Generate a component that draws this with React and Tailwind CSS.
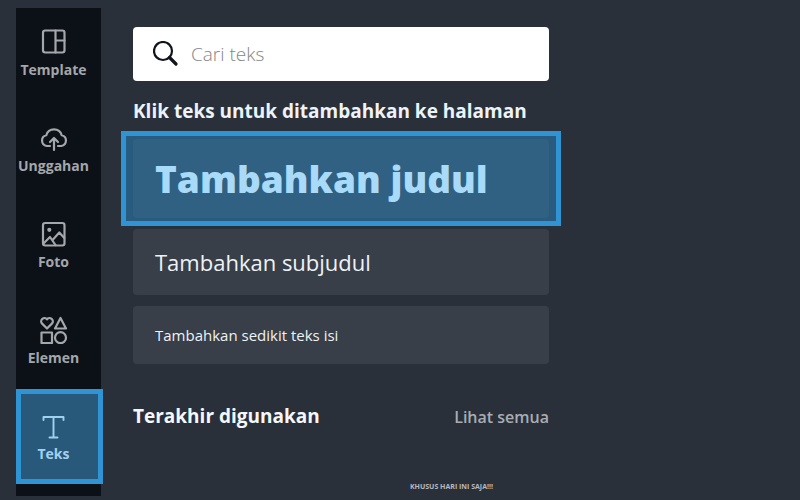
import React, { useState } from 'react';

const iconProps = {
  viewBox: '0 0 28 28',
  fill: 'none',
  stroke: 'currentColor',
  strokeWidth: 2.2,
  strokeLinecap: 'round',
  strokeLinejoin: 'round',
  className: 'w-7 h-7',
  'aria-hidden': true,
};

function TemplateIcon() {
  return (
    <svg {...iconProps}>
      <rect x="3" y="2.5" width="21.5" height="22" rx="2.2" />
      <path d="M15.500 2.500v22M15.500 12.500h9" />
    </svg>
  );
}

function UploadIcon() {
  return (
    <svg {...iconProps}>
      <path d="M10 22H6.800A5.500 5.500 0 0 1 6.300 11.200A8 8 0 0 1 21.700 11.200A5.500 5.500 0 0 1 21.200 22H18" />
      <path d="M14 26V14.500M10 18l4-4 4 4" />
    </svg>
  );
}

function PhotoIcon() {
  return (
    <svg {...iconProps}>
      <rect x="3" y="3" width="21.500" height="22.500" rx="2.200" />
      <circle cx="9.300" cy="9.800" r="1" fill="currentColor" />
      <path d="M3.500 23.500l6.500-6.500 5.500 8M12.800 19.700l6.500-7.200 5 5.500" />
    </svg>
  );
}

function ElementsIcon() {
  return (
    <svg {...iconProps}>
      <path d="M7 12.500L1.900 7.400A3.100 3.100 0 0 1 7 3.300A3.100 3.100 0 0 1 12.100 7.400Z" />
      <path d="M20.500 2l5.500 10.500h-11z" />
      <rect x="1.500" y="16.500" width="10.500" height="10.500" />
      <circle cx="20.500" cy="21.700" r="5.500" />
    </svg>
  );
}

function TextIcon() {
  return (
    <svg {...iconProps}>
      <path d="M3.500 8V5h20v3M13.500 5v20.500M9.500 25.500h8" strokeWidth="1.900" />
    </svg>
  );
}

const NAV = [
  { label: 'Template', icon: TemplateIcon },
  { label: 'Unggahan', icon: UploadIcon },
  { label: 'Foto', icon: PhotoIcon },
  { label: 'Elemen', icon: ElementsIcon },
  { label: 'Teks', icon: TextIcon, active: true },
];

function NavItem({ label, icon: Icon, active }) {
  return (
    <li className="relative h-24">
      {active && (
        <span className="absolute -top-[3px] left-0 -right-0.5 h-[95px] border-[5px] border-[#3094d4] bg-[#28597a]" />
      )}
      <button
        type="button"
        className={`relative w-full pt-5 pr-[10px] flex flex-col items-center gap-1 text-[14px] leading-5 font-bold ${active ? 'text-[#a2d1ef]' : 'text-[#a4a7ab]'}`}
      >
        <Icon />
        {label}
      </button>
    </li>
  );
}

export default function App() {
  const [query, setQuery] = useState('');

  return (
    <div className="min-h-screen bg-[#29303a] px-4 pt-2 pb-1 flex gap-8 font-['Open_Sans','Noto_Sans',sans-serif]">
      <nav className="w-[85px] shrink-0 bg-[#0c1117]">
        <ul>
          {NAV.map((item) => (
            <NavItem key={item.label} {...item} />
          ))}
        </ul>
      </nav>

      <main className="flex-1 min-w-0 max-w-[416px] pt-[19px]">
        <label className="h-[54px] px-5 flex items-center gap-3 rounded bg-white text-[#10151b]">
          <svg viewBox="0 0 26 26" fill="none" stroke="currentColor" strokeWidth="2.2" className="w-[26px] h-[26px] shrink-0" aria-hidden="true">
            <circle cx="10" cy="10" r="9" />
            <path d="M16.500 16.500l6.500 6.500" strokeWidth="3.200" strokeLinecap="round" />
          </svg>
          <input
            type="search"
            aria-label="Cari teks"
            placeholder="Cari teks"
            value={query}
            onChange={(e) => setQuery(e.target.value)}
            className="w-full bg-transparent text-[19px] leading-6 font-light outline-none placeholder:text-[#858585]"
          />
        </label>

        <h2 className="mt-4 text-[19px] leading-7 font-bold text-[#edf3f9]">Klik teks untuk ditambahkan ke halaman</h2>

        <div className="mt-[14px] flex flex-col gap-[11px]">
          <div className="relative">
            <span className="absolute -top-2 -bottom-2 -left-3 -right-3 border-[5px] border-[#3094d4] bg-[#285b7d]" />
            <button type="button" className="relative w-full h-[79px] px-[22px] rounded bg-[#306182] text-left text-[37px] leading-[52px] font-extrabold text-[#a9daf8]">
              Tambahkan judul
            </button>
          </div>
          <button type="button" className="h-[66px] px-[22px] rounded bg-[#383f48] text-left text-[22px] leading-8 text-[#eef2f6]">
            Tambahkan subjudul
          </button>
          <button type="button" className="h-[58px] px-[22px] rounded bg-[#383f48] text-left text-[15px] leading-6 text-[#eef2f6]">
            Tambahkan sedikit teks isi
          </button>
        </div>

        <div className="mt-[38px] flex items-baseline justify-between">
          <h2 className="text-[19px] leading-7 font-bold text-[#f5f8fb]">Terakhir digunakan</h2>
          <a href="#semua" className="text-[16px] leading-7 font-semibold text-[#a8adb3]">Lihat semua</a>
        </div>

        <p className="mt-[50px] pr-14 text-right text-[7px] leading-3 font-bold text-[#b5bac0]">KHUSUS HARI INI SAJA!!!</p>
      </main>
    </div>
  );
}
